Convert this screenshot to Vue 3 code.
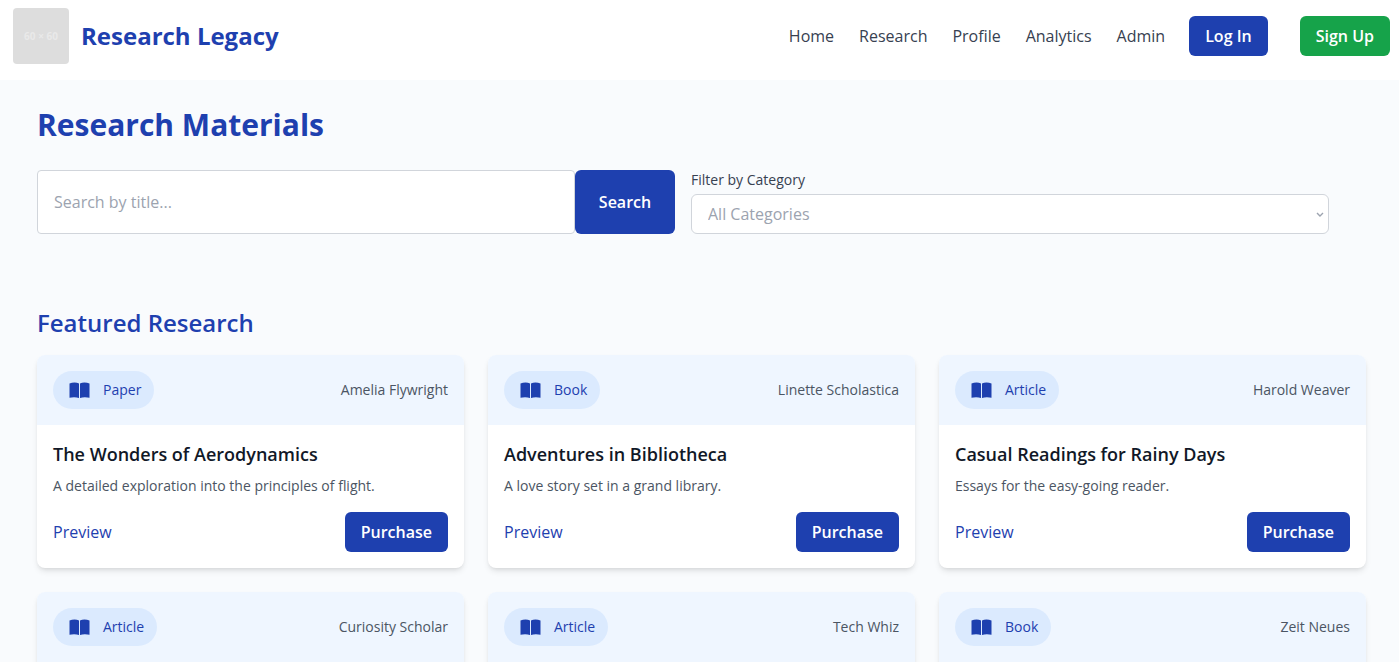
<script setup>
import { ref } from 'vue'

const query = ref('')
const category = ref('')
const links = ['Home', 'Research', 'Profile', 'Analytics', 'Admin']
const categories = ['Paper', 'Book', 'Article']
const items = [
  { type: 'Paper', author: 'Amelia Flywright', title: 'The Wonders of Aerodynamics', text: 'A detailed exploration into the principles of flight.' },
  { type: 'Book', author: 'Linette Scholastica', title: 'Adventures in Bibliotheca', text: 'A love story set in a grand library.' },
  { type: 'Article', author: 'Harold Weaver', title: 'Casual Readings for Rainy Days', text: 'Essays for the easy-going reader.' },
  { type: 'Article', author: 'Curiosity Scholar' },
  { type: 'Article', author: 'Tech Whiz' },
  { type: 'Book', author: 'Zeit Neues' },
]
</script>

<template>
  <div class="page">
    <header class="topbar">
      <a class="brand" href="#">
        <span class="logo">60 × 60</span>
        <span class="brand-name">Research Legacy</span>
      </a>
      <nav class="nav">
        <div class="links">
          <a v-for="link in links" :key="link" href="#">{{ link }}</a>
        </div>
        <button class="btn" type="button">Log In</button>
        <button class="btn green" type="button">Sign Up</button>
      </nav>
    </header>

    <main class="main">
      <h1>Research Materials</h1>
      <div class="filters">
        <form class="search" @submit.prevent>
          <input v-model="query" type="text" placeholder="Search by title..." aria-label="Search by title" />
          <button class="btn search-btn" type="submit">Search</button>
        </form>
        <div class="filter">
          <label for="category">Filter by Category</label>
          <div class="select-wrap">
            <select id="category" v-model="category">
              <option value="">All Categories</option>
              <option v-for="c in categories" :key="c" :value="c">{{ c }}</option>
            </select>
            <svg class="chevron" viewBox="0 0 8 6" aria-hidden="true"><path d="M1 1l3 3 3-3" /></svg>
          </div>
        </div>
      </div>

      <h2>Featured Research</h2>
      <div class="grid">
        <article v-for="(item, i) in items" :key="i" class="card">
          <div class="card-head">
            <span class="pill">
              <svg class="book" viewBox="0 0 21 16" aria-hidden="true">
                <path d="M.5 1.6C3.5 .1 7.5 .1 10 1.5V16C7.5 14.9 3.5 14.9 .5 15.7ZM11 1.5C13.5 .1 17.5 .1 20.5 1.6V15.7C17.5 14.9 13.5 14.9 11 16Z" />
              </svg>
              {{ item.type }}
            </span>
            <span class="author">{{ item.author }}</span>
          </div>
          <div v-if="item.title" class="card-body">
            <h3>{{ item.title }}</h3>
            <p>{{ item.text }}</p>
            <div class="actions">
              <a href="#">Preview</a>
              <button class="btn" type="button">Purchase</button>
            </div>
          </div>
        </article>
      </div>
    </main>
  </div>
</template>

<style>
html {
  scrollbar-width: none;
}
body {
  background: #f9fbfd;
}
</style>

<style scoped>
.page {
  min-height: 100vh;
  background: #f9fbfd;
  font-family: "Open Sans", "Noto Sans", sans-serif;
  font-size: 16px;
  line-height: 24px;
  color: #374151;
}
.page *,
.page {
  box-sizing: border-box;
}
a {
  color: inherit;
  text-decoration: none;
}
h1,
h2,
h3,
p {
  margin: 0;
}
input,
select,
button {
  font: inherit;
  margin: 0;
}
.topbar {
  display: flex;
  align-items: center;
  justify-content: space-between;
  padding: 8px 9px 16px 13px;
  background: #fff;
}
.brand {
  display: flex;
  align-items: center;
  gap: 12px;
}
.logo {
  display: flex;
  align-items: center;
  justify-content: center;
  width: 56px;
  height: 56px;
  border-radius: 4px;
  background: #ddd;
  color: #e9e9e9;
  font-size: 10px;
  font-weight: 700;
}
.brand-name {
  font-size: 24px;
  line-height: 32px;
  font-weight: 700;
  color: #1e40af;
}
.nav {
  display: flex;
  align-items: center;
  gap: 24px;
}
.links {
  display: flex;
  gap: 25px;
  font-weight: 500;
}
.btn {
  padding: 8px 16px;
  border: 0;
  border-radius: 6px;
  background: #1e40af;
  color: #fff;
  font-weight: 600;
  cursor: pointer;
}
.green {
  margin-left: 8px;
  background: #16a34a;
}
.main {
  padding: 27px 33px 24px 37px;
}
h1 {
  font-size: 30px;
  line-height: 36px;
  font-weight: 700;
  color: #1e40af;
}
.filters {
  display: grid;
  grid-template-columns: 1fr 1fr;
  gap: 16px;
  margin: 27px 37px 73px 0;
}
.search {
  display: flex;
}
.search input {
  flex: 1;
  min-width: 0;
  padding: 8px 16px;
  border: 1px solid #d1d5db;
  border-radius: 4px;
  background: #fff;
  color: #374151;
}
.search input::placeholder {
  color: #9ca3af;
}
.search-btn {
  width: 100px;
}
.filter label {
  display: block;
  margin-bottom: 4px;
  font-size: 14px;
  line-height: 20px;
  font-weight: 500;
}
.select-wrap {
  position: relative;
}
.filter select {
  display: block;
  width: 100%;
  height: 40px;
  padding: 0 16px;
  border: 1px solid #d1d5db;
  border-radius: 6px;
  background: #fff;
  color: #9ca3af;
  appearance: none;
}
.chevron {
  position: absolute;
  right: 5px;
  top: 18px;
  width: 8px;
  height: 6px;
  fill: none;
  stroke: #9ca3af;
  stroke-width: 1.4;
  pointer-events: none;
}
h2 {
  margin-bottom: 16px;
  font-size: 24px;
  line-height: 32px;
  font-weight: 600;
  color: #1e40af;
}
.grid {
  display: grid;
  grid-template-columns: repeat(3, 1fr);
  gap: 24px;
}
.card {
  min-height: 160px;
  overflow: hidden;
  border-radius: 8px;
  background: #fff;
  box-shadow: 0 4px 6px -1px rgba(0, 0, 0, 0.1), 0 2px 4px -2px rgba(0, 0, 0, 0.1);
}
.card-head {
  display: flex;
  align-items: center;
  justify-content: space-between;
  padding: 16px;
  background: #eff6ff;
  font-size: 14px;
  line-height: 20px;
}
.pill {
  display: flex;
  align-items: center;
  gap: 13px;
  height: 38px;
  padding: 0 13px 0 16px;
  border-radius: 20px;
  background: #dbeafe;
  color: #1e40af;
  font-weight: 500;
}
.book {
  width: 21px;
  height: 16px;
  fill: #1e40af;
}
.author {
  color: #4b5563;
}
.card-body {
  padding: 15px 16px 16px;
}
h3 {
  font-size: 18px;
  line-height: 28px;
  font-weight: 600;
  color: #111827;
}
.card-body p {
  margin: 8px 0 16px;
  font-size: 14px;
  line-height: 20px;
  color: #4b5563;
}
.actions {
  display: flex;
  align-items: center;
  justify-content: space-between;
}
.actions a {
  color: #1e40af;
  font-weight: 500;
}
</style>
